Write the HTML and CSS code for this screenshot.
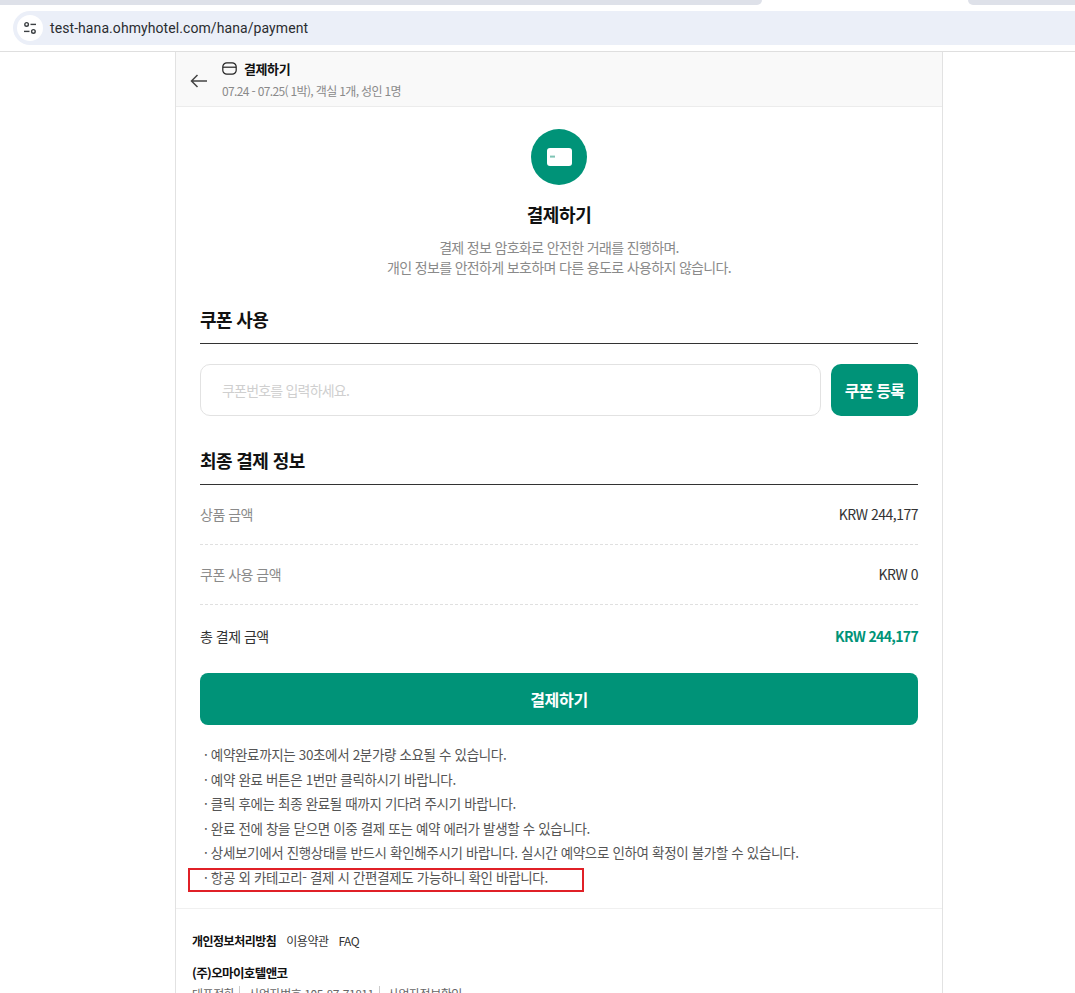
FILE: index.html
```html
<!DOCTYPE html>
<html lang="ko">
  <head>
    <meta charset="UTF-8" />
    <meta name="viewport" content="width=device-width, initial-scale=1.0" />
    <title>결제하기</title>
    <link rel="stylesheet" href="styles.css">
  </head>
  <body>
    <div class="browser">
      <div class="tabs">
        <div class="tab-rest"></div>
        <div class="tab-active"></div>
        <div class="tab-next"></div>
      </div>
      <div class="toolbar">
        <div class="address">
          <span class="site-btn">
            <svg width="14" height="14" viewBox="0 0 14 14" fill="none" stroke="#3c4043" stroke-width="1.4">
              <circle cx="3.6" cy="3.4" r="1.8"/>
              <path d="M7.5 3.4h5.5"/>
              <circle cx="10.4" cy="10.4" r="1.8"/>
              <path d="M1 10.4h5.5"/>
            </svg>
          </span>
          <span class="url">test-hana.ohmyhotel.com/hana/payment</span>
        </div>
      </div>
    </div>

    <main class="page">
      <header class="top">
        <svg class="back" width="18" height="14" viewBox="0 0 18 14" fill="none" stroke="#444" stroke-width="1.5">
          <path d="M17 7H1.5M7.5 1 1.5 7l6 6"/>
        </svg>
        <div>
          <div class="top-title">
            <svg width="15" height="13" viewBox="0 0 15 13" fill="none" stroke="#222" stroke-width="1.2">
              <rect x="0.8" y="0.8" width="13.4" height="11.4" rx="4"/>
              <path d="M1 5.2h13"/>
            </svg>
            <b>결제하기</b>
          </div>
          <p class="top-sub">07.24 - 07.25( 1박), 객실 1개, 성인 1명</p>
        </div>
      </header>

      <section class="intro">
        <div class="intro-icon">
          <svg width="25" height="18" viewBox="0 0 25 18">
            <rect width="25" height="18" rx="3" fill="#fff"/>
            <rect x="3" y="7.6" width="5" height="2" fill="#7fc4b5"/>
          </svg>
        </div>
        <h1>결제하기</h1>
        <p>결제 정보 암호화로 안전한 거래를 진행하며.<br>개인 정보를 안전하게 보호하며 다른 용도로 사용하지 않습니다.</p>
      </section>

      <section class="content">
        <h2>쿠폰 사용</h2>
        <div class="coupon">
          <input class="coupon-input" type="text" placeholder="쿠폰번호를 입력하세요.">
          <button class="coupon-btn">쿠폰 등록</button>
        </div>

        <h2 class="final-title">최종 결제 정보</h2>
        <div class="row">
          <span class="label">상품 금액</span>
          <span class="value">KRW 244,177</span>
        </div>
        <div class="row">
          <span class="label">쿠폰 사용 금액</span>
          <span class="value">KRW 0</span>
        </div>
        <div class="row total">
          <span class="label">총 결제 금액</span>
          <span class="value">KRW 244,177</span>
        </div>

        <button class="pay-btn">결제하기</button>

        <ul class="notes">
          <li>· 예약완료까지는 30초에서 2분가량 소요될 수 있습니다.</li>
          <li>· 예약 완료 버튼은 1번만 클릭하시기 바랍니다.</li>
          <li>· 클릭 후에는 최종 완료될 때까지 기다려 주시기 바랍니다.</li>
          <li>· 완료 전에 창을 닫으면 이중 결제 또는 예약 에러가 발생할 수 있습니다.</li>
          <li>· 상세보기에서 진행상태를 반드시 확인해주시기 바랍니다. 실시간 예약으로 인하여 확정이 불가할 수 있습니다.</li>
          <li class="marked">· 항공 외 카테고리- 결제 시 간편결제도 가능하니 확인 바랍니다.</li>
        </ul>
      </section>

      <footer class="foot">
        <div class="foot-links">
          <b>개인정보처리방침</b>
          <span>이용약관</span>
          <span>FAQ</span>
        </div>
        <div class="company">(주)오마이호텔앤코</div>
        <div class="company-info">
          <span>대표전화</span>
          <span>사업자번호 105-87-71811</span>
          <span>사업자정보확인</span>
        </div>
      </footer>
    </main>
  </body>
</html>
```

FILE: styles.css
```css
* {
  margin: 0;
  padding: 0;
  box-sizing: border-box;
}
html,
body {
  height: 993px;
  overflow: hidden;
}
body {
  background-color: #fff;
  color: #222;
  font-family: "Noto Sans CJK KR", "Noto Sans", sans-serif;
}
.browser {
  height: 52px;
  border-bottom: 1px solid #dfdfdf;
  background-color: #fff;
}
.tabs {
  display: flex;
  height: 5px;
}
.tab-rest {
  width: 762px;
  background-color: #dee1e9;
  border-bottom-right-radius: 7px;
}
.tab-active {
  width: 206px;
}
.tab-next {
  flex: 1;
  background-color: #dee1e9;
  border-bottom-left-radius: 7px;
}
.toolbar {
  padding: 6px 0 0 13px;
}
.address {
  display: flex;
  align-items: center;
  height: 34px;
  padding-left: 4px;
  gap: 7px;
  background-color: #ebeff8;
  border-radius: 17px 0 0 17px;
}
.site-btn {
  display: flex;
  align-items: center;
  justify-content: center;
  width: 26px;
  height: 26px;
  border-radius: 50%;
  background-color: #fff;
}
.url {
  font-family: "Roboto", sans-serif;
  font-size: 14px;
  letter-spacing: 0.08px;
  color: #2a2c30;
}
.page {
  width: 768px;
  margin-left: 175px;
  height: 941px;
  overflow: hidden;
  border-left: 1px solid #e2e2e2;
  border-right: 1px solid #e2e2e2;
}
.top {
  display: flex;
  align-items: center;
  height: 55px;
  padding-left: 14px;
  gap: 14px;
  background-color: #f9f9f9;
  border-bottom: 1px solid #ececec;
}
.back {
  margin-top: 3px;
}
.top-title {
  display: flex;
  align-items: center;
  gap: 7px;
  font-size: 13px;
  line-height: 19px;
  letter-spacing: -0.4px;
  color: #111;
}
.top-sub {
  margin-top: 4px;
  font-size: 12px;
  line-height: 17px;
  letter-spacing: -0.65px;
  color: #8a8a8a;
}
.intro {
  display: flex;
  flex-direction: column;
  align-items: center;
  padding-top: 22px;
  text-align: center;
}
.intro-icon {
  display: flex;
  align-items: center;
  justify-content: center;
  width: 56px;
  height: 56px;
  border-radius: 50%;
  background-color: #009378;
}
.intro h1 {
  margin-top: 16px;
  font-size: 18px;
  line-height: 26px;
  letter-spacing: -0.4px;
  color: #111;
}
.intro p {
  margin-top: 10px;
  font-size: 14px;
  line-height: 20px;
  letter-spacing: -0.65px;
  color: #8a8a8a;
}
.content {
  padding: 0 24px;
}
.content h2 {
  height: 38px;
  margin-top: 29px;
  font-size: 18px;
  line-height: 26px;
  letter-spacing: -0.6px;
  color: #111;
  border-bottom: 1px solid #333;
}
.coupon {
  display: flex;
  gap: 10px;
  margin-top: 20px;
}
.coupon-input {
  flex: 1;
  height: 52px;
  padding: 0 21px;
  border: 1px solid #e2e2e2;
  border-radius: 10px;
  font-family: inherit;
  font-size: 14px;
  letter-spacing: -0.8px;
}
.coupon-input::placeholder {
  color: #cfcfcf;
}
.coupon-btn {
  width: 87px;
  height: 52px;
  border: none;
  border-radius: 10px;
  background-color: #009378;
  color: #fff;
  font-family: inherit;
  font-size: 16px;
  font-weight: 700;
  letter-spacing: -0.8px;
}
.content .final-title {
  margin-top: 31px;
}
.row {
  display: flex;
  justify-content: space-between;
  align-items: center;
  height: 60px;
  padding-bottom: 2px;
  font-size: 14px;
  letter-spacing: -0.5px;
  border-bottom: 1px dashed #e0e0e0;
}
.label {
  color: #8a8a8a;
}
.value {
  color: #333;
}
.total {
  height: 64px;
  border-bottom: none;
}
.total .label {
  color: #333;
}
.total .value {
  color: #009378;
  font-weight: 700;
  letter-spacing: -0.65px;
}
.pay-btn {
  display: block;
  width: 100%;
  height: 52px;
  margin-top: 4px;
  border: none;
  border-radius: 8px;
  background-color: #009378;
  color: #fff;
  font-family: inherit;
  font-size: 16px;
  font-weight: 700;
  letter-spacing: -0.3px;
}
.notes {
  margin-top: 17px;
  padding-left: 4px;
  list-style: none;
  font-size: 13.5px;
  line-height: 24.5px;
  letter-spacing: -0.35px;
  color: #555;
}
.marked {
  position: relative;
}
.marked::after {
  content: "";
  box-sizing: border-box;
  position: absolute;
  left: -16px;
  top: 3px;
  width: 396px;
  height: 24px;
  border: 2px solid #e02027;
}
.foot {
  margin-top: 19px;
  padding: 23px 16px 0;
  border-top: 1px solid #f0f0f0;
}
.foot-links {
  display: flex;
  gap: 10px;
  font-size: 12px;
  line-height: 18px;
  letter-spacing: -0.5px;
  color: #333;
}
.foot-links b {
  color: #111;
}
.company {
  margin-top: 14px;
  font-size: 12.5px;
  font-weight: 700;
  line-height: 18px;
  letter-spacing: -0.6px;
  color: #111;
}
.company-info {
  display: flex;
  gap: 5px;
  margin-top: 4px;
  font-size: 12px;
  line-height: 16px;
  letter-spacing: -0.45px;
  color: #666;
}
.company-info span + span {
  padding-left: 8px;
  border-left: 1px solid #ccc;
}
```
